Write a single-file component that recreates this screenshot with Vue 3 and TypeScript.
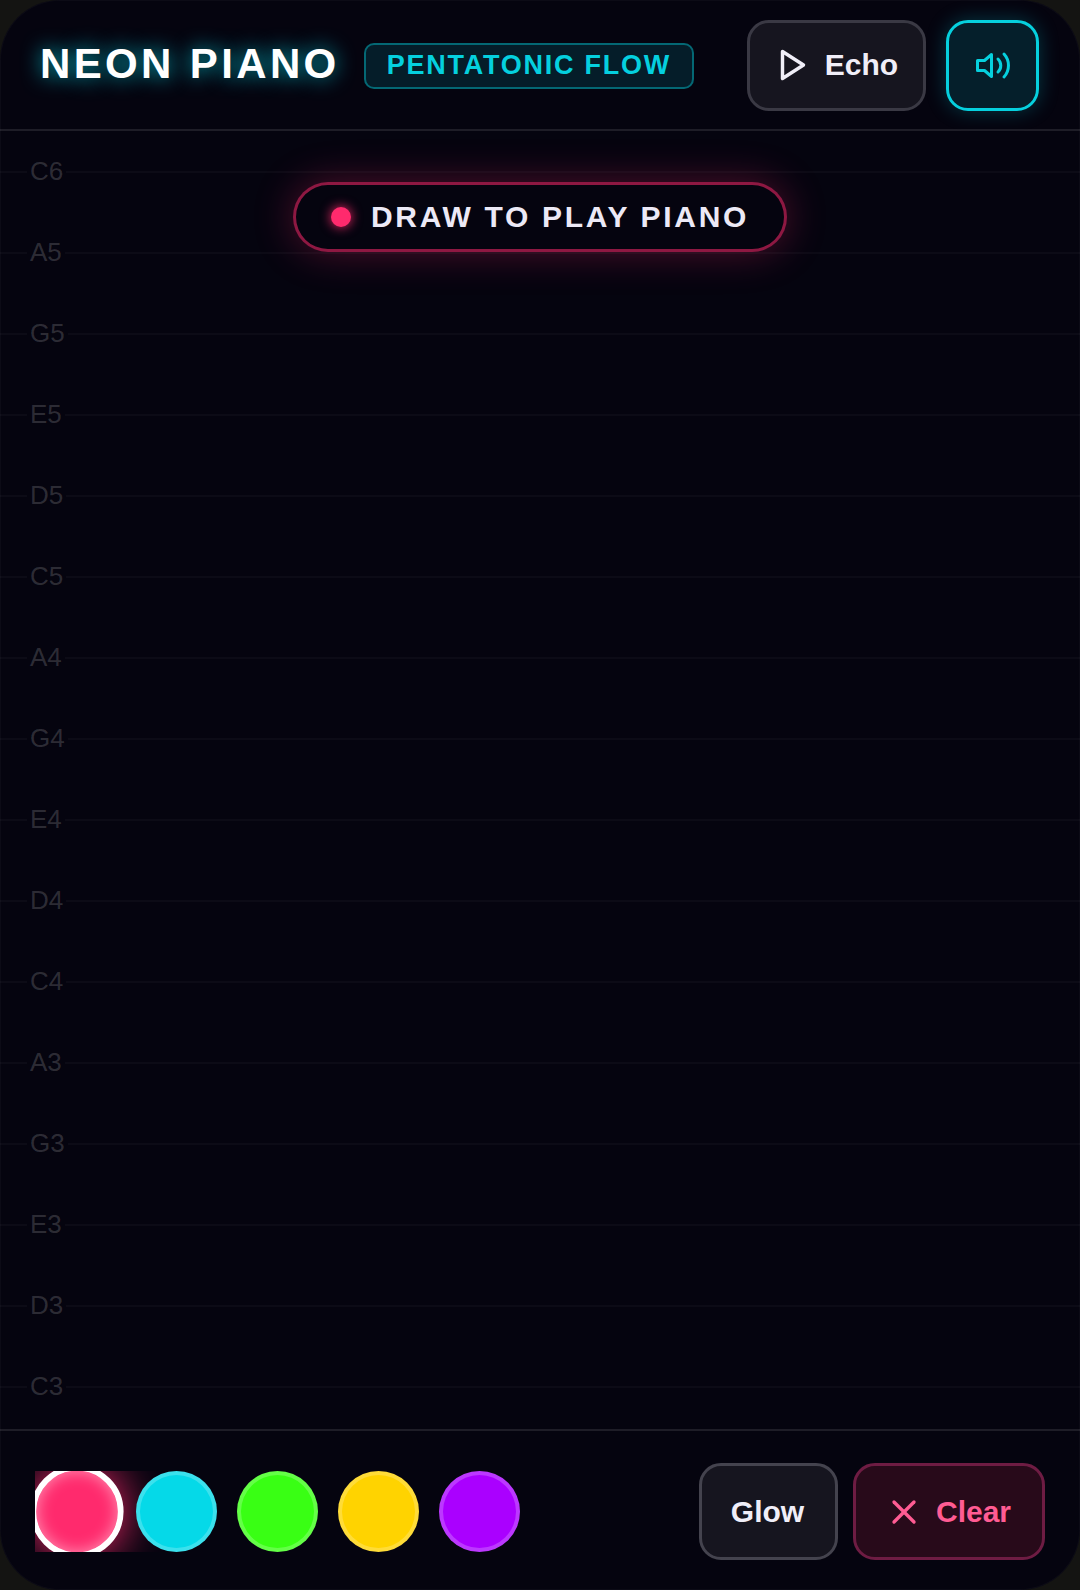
<script setup lang="ts">
const notes = ['C6', 'A5', 'G5', 'E5', 'D5', 'C5', 'A4', 'G4', 'E4', 'D4', 'C4', 'A3', 'G3', 'E3', 'D3', 'C3'];
const swatches = [
    { color: '#ff2a6d', active: true },
    { color: '#05d9e8', active: false },
    { color: '#39ff14', active: false },
    { color: '#ffd300', active: false },
    { color: '#aa00ff', active: false },
];
</script>

<template>
    <div class="app">
        <header class="top">
            <div class="top__left">
                <h1 class="title">NEON PIANO</h1>
                <span class="badge">PENTATONIC FLOW</span>
            </div>
            <div class="top__right">
                <button class="btn btn--echo">
                    <svg class="icon" viewBox="0 0 24 24" fill="none" stroke="currentColor" stroke-width="2.3" stroke-linejoin="round">
                        <polygon points="5 3 19 12 5 21 5 3" />
                    </svg>
                    Echo
                </button>
                <button class="btn btn--sound">
                    <svg class="icon" viewBox="0 0 40 40" fill="none" stroke="currentColor" stroke-width="3" stroke-linecap="round" stroke-linejoin="round">
                        <polygon points="18.5 9.5 11.5 15.5 4.5 15.5 4.5 25.5 11.5 25.5 18.5 31.5" />
                        <path d="M25 14a9 9 0 0 1 0 13" />
                        <path d="M31 9a17 17 0 0 1 0 23" />
                    </svg>
                </button>
            </div>
        </header>

        <main class="board">
            <div v-for="note in notes" :key="note" class="row">
                <span class="row__tick" />
                <span class="row__note">{{ note }}</span>
                <span class="row__line" />
            </div>
            <div class="hint">
                <span class="hint__dot" />
                <span>DRAW TO PLAY PIANO</span>
            </div>
        </main>

        <footer class="bottom">
            <div class="swatches">
                <span
                    v-for="s in swatches"
                    :key="s.color"
                    class="swatch"
                    :class="{ 'swatch--active': s.active }"
                    :style="{ background: s.color, color: s.color }"
                />
            </div>
            <div class="actions">
                <button class="btn btn--glow">Glow</button>
                <button class="btn btn--clear">
                    <svg class="icon icon--x" viewBox="0 0 24 24" fill="none" stroke="currentColor" stroke-width="2" stroke-linecap="round">
                        <path d="M18 6 6 18" />
                        <path d="m6 6 12 12" />
                    </svg>
                    Clear
                </button>
            </div>
        </footer>
    </div>
</template>

<style>
html, body { margin: 0; background: #141412; }
</style>

<style scoped>
.app {
    width: 1080px; height: 1590px;
    display: flex; flex-direction: column;
    background: #05040f;
    border-radius: 60px;
    box-shadow: inset 0 0 0 1px rgba(255,255,255,0.03);
    overflow: hidden;
    font-family: "Liberation Sans", Arial, sans-serif;
}

.top {
    height: 127px; flex-shrink: 0;
    display: flex; align-items: center; justify-content: space-between;
    padding: 2px 41px 0 40px;
    border-bottom: 2px solid rgba(255,255,255,0.1);
}
.top__left { display: flex; align-items: center; gap: 24px; }
.top__right { display: flex; align-items: center; gap: 20px; }

.title {
    margin: 0; padding-bottom: 4px;
    font-size: 42px; font-weight: 700; letter-spacing: 3.36px; line-height: 1;
    color: #fff;
    text-shadow: 0 0 20px rgba(5,217,232,0.8);
}
.badge {
    padding: 7px 21px 8px;
    font-size: 27px; font-weight: 700; letter-spacing: 1.75px; line-height: 1;
    color: #05d0df;
    background: rgba(5,217,232,0.12);
    border: 2px solid rgba(5,217,232,0.4);
    border-radius: 10px;
}

.btn {
    display: inline-flex; align-items: center; justify-content: center;
    box-sizing: border-box;
    padding: 0;
    font-family: inherit; font-size: 30px; font-weight: 700;
    color: #f0eef8;
    background: #16151f;
    border: 3px solid #3a3944;
    border-radius: 22px;
}
.btn--echo { width: 179px; height: 91px; gap: 14px; padding-bottom: 1px; }
.btn--sound {
    width: 93px; height: 91px; padding-bottom: 1px;
    color: #06d0de;
    background: rgba(5,217,232,0.13);
    border-color: #06d0de;
    box-shadow: 0 0 20px rgba(5,217,232,0.25);
}
.btn--glow { width: 139px; height: 97px; padding: 2px 2px 0 0; border-color: #44434e; }
.btn--clear {
    width: 192px; height: 97px; gap: 12px; padding: 2px 3px 0 0;
    color: #ff5c93;
    background: #280a1a;
    border-color: #6e1c43;
}

.icon { width: 36px; height: 36px; flex-shrink: 0; }
.btn--sound .icon { width: 40px; height: 40px; }
.icon--x { width: 40px; height: 40px; }

.board { flex: 1; min-height: 0; position: relative; display: flex; flex-direction: column; }

.row { flex: none; height: 81px; display: flex; align-items: center; gap: 3px; }
.row__tick { width: 27px; height: 2px; background: rgba(255,255,255,0.03); }
.row__note { padding-bottom: 2px; font-size: 26px; line-height: 1; color: rgba(255,255,255,0.17); }
.row__line { flex: 1; height: 2px; background: rgba(255,255,255,0.03); }

.hint {
    position: absolute; top: 51px; left: 293px;
    width: 494px; height: 70px; box-sizing: border-box;
    display: flex; align-items: center; gap: 20px;
    padding-left: 35px;
    font-size: 30px; font-weight: 700; letter-spacing: 2.7px;
    color: #ece9f6;
    background: #05040f;
    border: 3px solid rgba(255,42,109,0.55);
    border-radius: 999px;
    box-shadow: 0 0 40px rgba(255,42,109,0.3);
}
.hint__dot {
    width: 20px; height: 20px; border-radius: 50%;
    background: #ff2a6d;
    box-shadow: 0 0 12px #ff2a6d;
}

.bottom {
    height: 158px; flex-shrink: 0;
    display: flex; align-items: center; justify-content: space-between;
    padding: 1px 35px 0 35px;
    border-top: 2px solid rgba(255,255,255,0.1);
}
.swatches { display: flex; gap: 20px; overflow: hidden; }
.swatch {
    flex-shrink: 0;
    position: relative; z-index: 1;
    width: 81px; height: 81px; box-sizing: border-box;
    border: 4px solid rgba(255,255,255,0.22);
    border-radius: 50%;
}
.swatch--active {
    z-index: 0;
    transform: translateX(1.5px) scale(1.15);
    border: 5px solid #fff;
    box-shadow: 0 0 40px currentColor, inset 0 0 14px rgba(255,255,255,0.5);
}
.actions { display: flex; gap: 15px; }
</style>
